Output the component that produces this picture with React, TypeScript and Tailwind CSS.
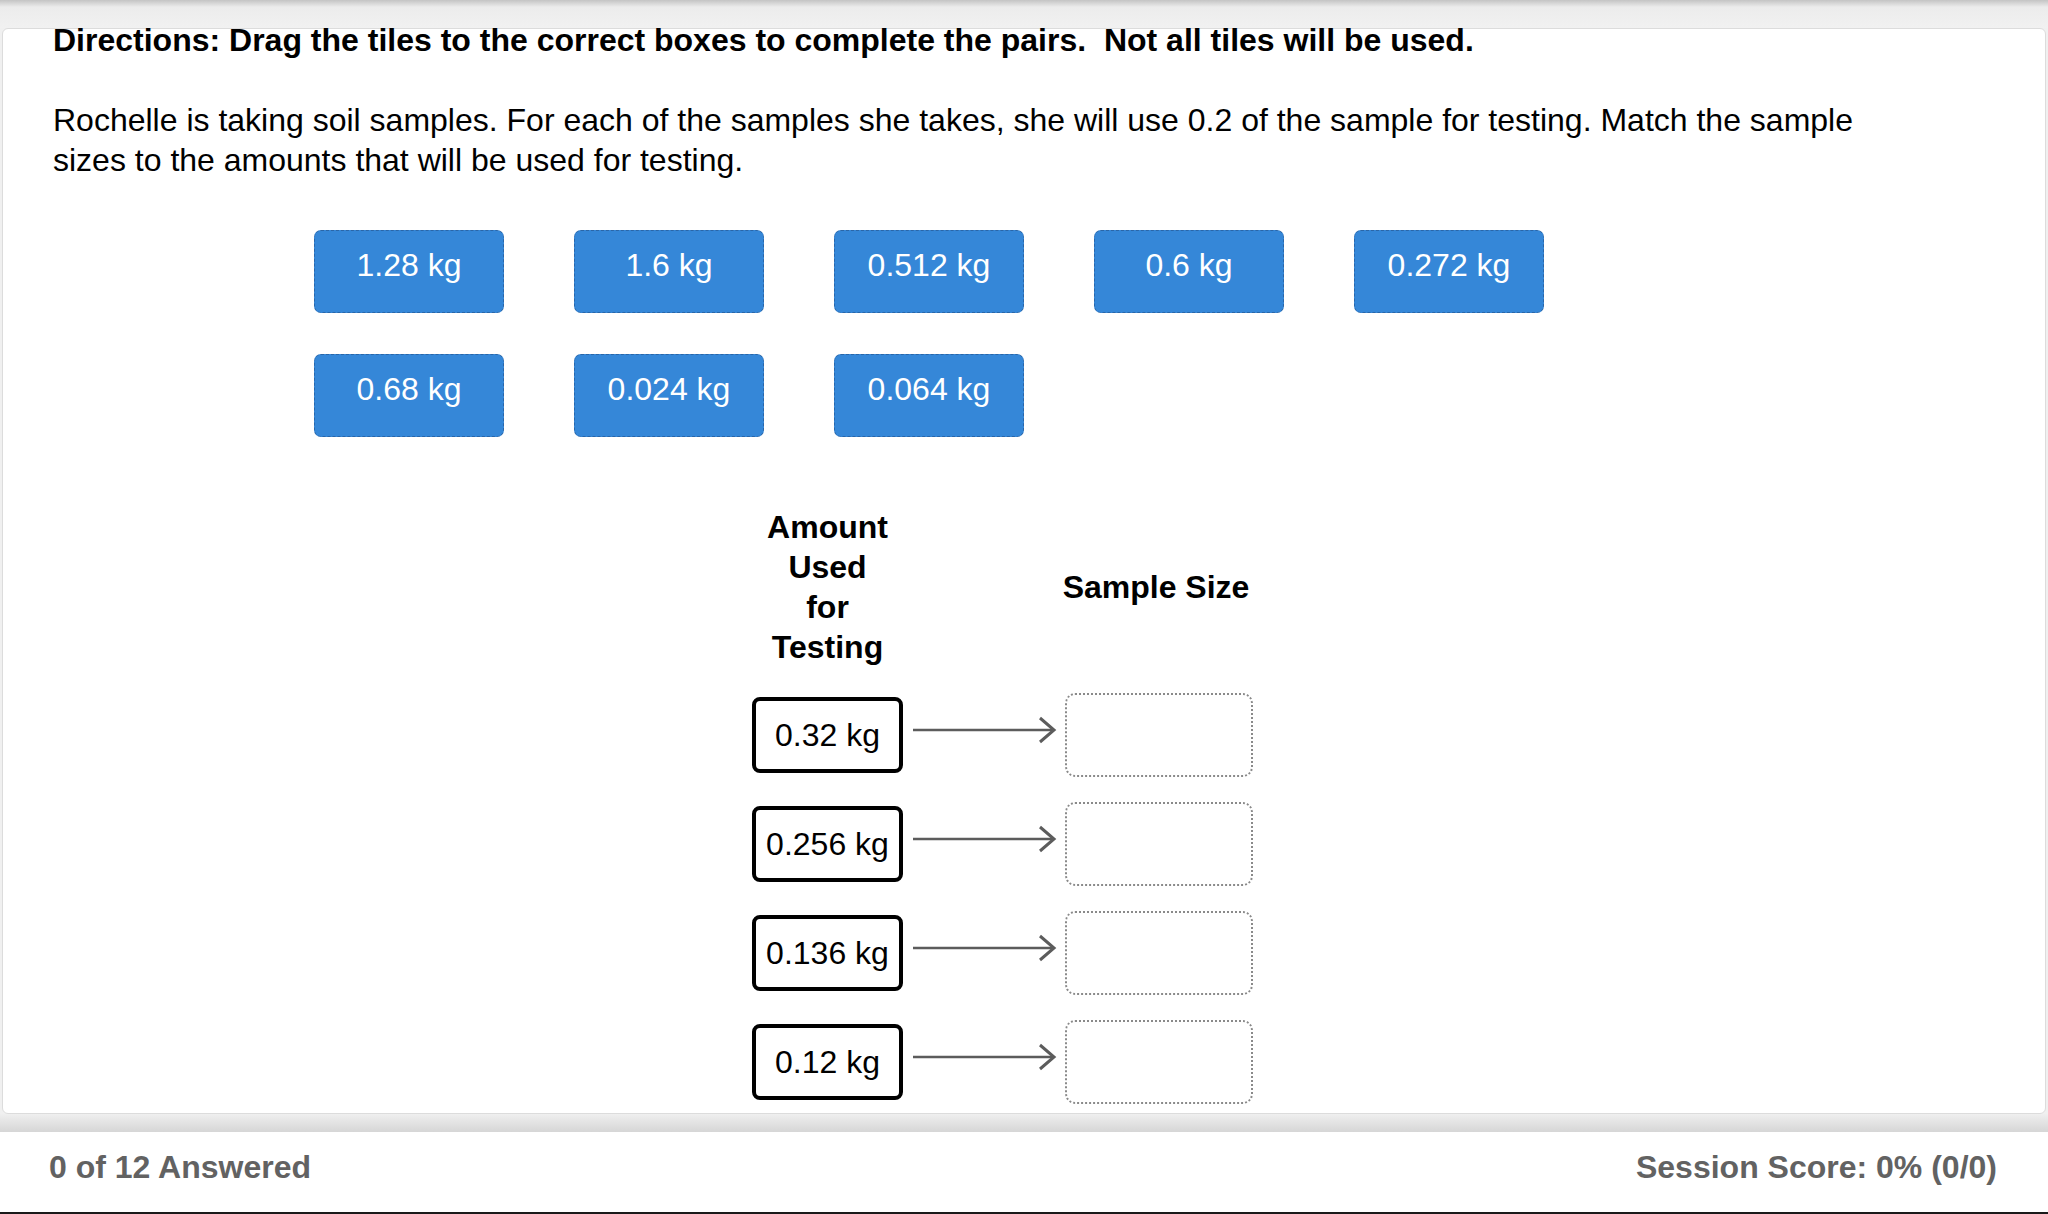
import React from "react";

const tilesTop = ["1.28 kg", "1.6 kg", "0.512 kg", "0.6 kg", "0.272 kg", "0.68 kg", "0.024 kg", "0.064 kg"];
const amounts = ["0.32 kg", "0.256 kg", "0.136 kg", "0.12 kg"];

function Arrow() {
  return (
    <svg width="145" height="30" viewBox="0 0 145 30" className="ml-[10px] mb-[10px] shrink-0">
      <line x1="0" y1="15" x2="141" y2="15" stroke="#5c5c5c" strokeWidth="2.6" />
      <polyline points="127,3 141,15 127,27" fill="none" stroke="#5c5c5c" strokeWidth="3" strokeLinejoin="miter" />
    </svg>
  );
}

export default function App() {
  return (
    <div
      className="w-[2048px] h-[1214px] flex flex-col bg-[#f0f0f0] overflow-hidden"
      style={{ fontFamily: '"Liberation Sans", Arial, Helvetica, sans-serif' }}
    >
      {/* top bar */}
      <div className="h-[28px] shrink-0 bg-linear-to-b from-[#c4c4c4] via-[#ececec] via-25% to-[#f1f1f1]" />

      {/* card */}
      <div className="mx-[2px] h-[1086px] shrink-0 bg-white border border-[#dcdcdc] rounded-[6px]">
        <div className="pl-[50px] -mt-[9px]">
          <div className="text-[32px] leading-[40px] font-bold text-black">
            Directions: Drag the tiles to the correct boxes to complete the pairs.{"\u00a0"} Not all tiles will be used.
          </div>
          <p className="mt-[40px] text-[32px] leading-[40px] text-black max-w-[1840px]">
            Rochelle is taking soil samples. For each of the samples she takes, she will use 0.2 of the sample for testing. Match the sample sizes to the amounts that will be used for testing.
          </p>

          {/* tiles */}
          <div className="mt-[50px] ml-[261px] w-[1230px] flex flex-wrap gap-x-[70px] gap-y-[41px]">
            {tilesTop.map((t) => (
              <div
                key={t}
                className="w-[190px] h-[83px] bg-[#3587d8] border border-dashed border-[#2a66a8] rounded-[7px] text-white text-[32px] leading-[40px] text-center pt-[14px]"
              >
                {t}
              </div>
            ))}
          </div>

          {/* matching table */}
          <div className="mt-[70px] ml-[699px]">
            <div className="flex items-center">
              <div className="w-[151px] shrink-0 flex justify-center">
                <div className="w-[124px] text-center text-[32px] leading-[40px] font-bold text-black">
                  Amount Used for Testing
                </div>
              </div>
              <div className="w-[158px] shrink-0" />
              <div className="w-[190px] shrink-0 text-center text-[32px] leading-[40px] font-bold text-black whitespace-nowrap">
                Sample Size
              </div>
            </div>
            <div className="mt-[26px] flex flex-col gap-[25px]">
              {amounts.map((a) => (
                <div key={a} className="flex items-center h-[84px]">
                  <div className="w-[151px] h-[76px] shrink-0 border-[4px] border-black rounded-[8px] flex items-center justify-center text-[32px] leading-[40px] text-black">
                    {a}
                  </div>
                  <Arrow />
                  <div className="w-[188px] h-[84px] ml-[7px] shrink-0 border-2 border-dotted border-[#8a8a8a] rounded-[10px]" />
                </div>
              ))}
            </div>
          </div>
        </div>
      </div>

      {/* lower gray bar */}
      <div className="h-[18px] shrink-0 bg-linear-to-b from-[#efefef] to-[#d6d6d6]" />

      {/* footer */}
      <div className="h-[80px] shrink-0 bg-white flex items-center justify-between pl-[49px] pr-[51px] pb-[10px]">
        <div className="text-[32px] leading-[40px] font-bold text-[#626262]">0 of 12 Answered</div>
        <div className="text-[32px] leading-[40px] font-bold text-[#626262]">Session Score: 0% (0/0)</div>
      </div>
      <div className="h-[2px] shrink-0 bg-[#1a1a1a]" />
    </div>
  );
}
